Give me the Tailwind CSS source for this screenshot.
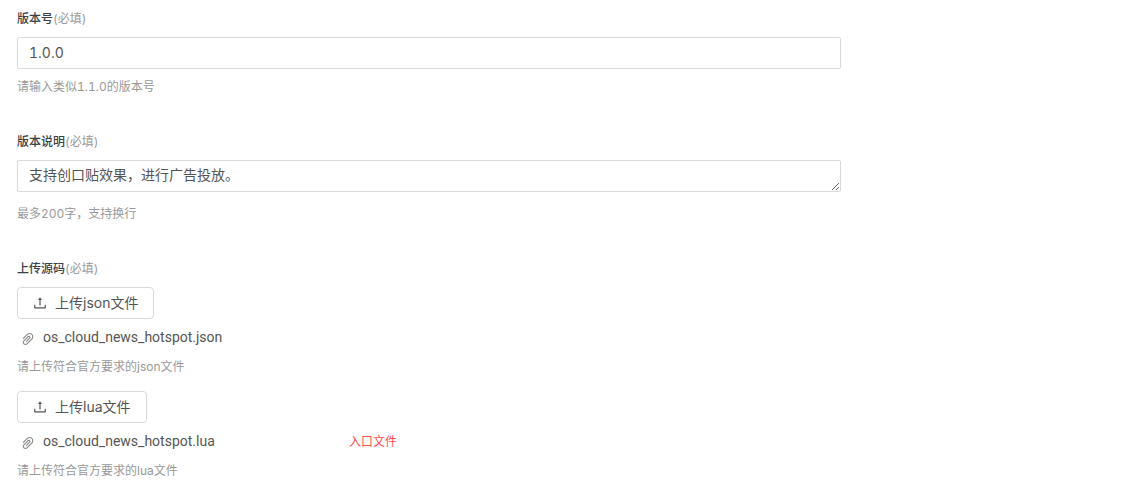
<!DOCTYPE html>
<html lang="zh-CN">
<head>
<meta charset="utf-8">
<meta name="viewport" content="width=device-width, initial-scale=1">
<title>版本上传</title>
<script src="https://cdn.jsdelivr.net/npm/@tailwindcss/browser@4"></script>
</head>
<body class="bg-white font-['Inter','Noto_Sans_CJK_SC',sans-serif] text-sm text-[#555] tabular-nums">
<svg class="hidden" aria-hidden="true">
  <symbol id="upload" viewBox="0 0 1024 1024"><path d="M400 317.7h73.9V656c0 4.4 3.6 8 8 8h60c4.4 0 8-3.6 8-8V317.7H624c6.7 0 10.4-7.7 6.3-12.9L518.3 163a8 8 0 00-12.6 0l-112 141.7c-4.1 5.3-.4 13 6.3 13zM878 626h-60c-4.4 0-8 3.6-8 8v154H214V634c0-4.4-3.6-8-8-8h-60c-4.4 0-8 3.6-8 8v198c0 17.7 14.3 32 32 32h684c17.7 0 32-14.3 32-32V634c0-4.4-3.6-8-8-8z"/></symbol>
  <symbol id="clip" viewBox="0 0 1024 1024"><path d="M779.3 196.6c-94.2-94.2-247.6-94.2-341.7 0l-261 260.8c-1.7 1.7-2.6 4-2.6 6.4s.9 4.7 2.6 6.4l36.9 36.9a9 9 0 0012.7 0l261-260.8c32.4-32.4 75.5-50.2 121.3-50.2s88.9 17.8 121.2 50.2c32.4 32.4 50.2 75.5 50.2 121.2 0 45.8-17.8 88.8-50.2 121.2l-266 265.9-43.1 43.1c-40.3 40.3-105.8 40.3-146.1 0-19.5-19.5-30.2-45.4-30.2-73s10.7-53.5 30.2-73l263.9-263.8c6.7-6.6 15.5-10.3 24.9-10.3h.1c9.4 0 18.1 3.7 24.7 10.3 6.7 6.7 10.3 15.5 10.3 24.9 0 9.3-3.7 18.1-10.3 24.7L372.4 653c-1.7 1.7-2.6 4-2.6 6.4s.9 4.7 2.6 6.4l36.9 36.9a9 9 0 0012.7 0l215.6-215.6c19.9-19.9 30.8-46.3 30.8-74.4s-11-54.6-30.8-74.4c-41.1-41.1-107.9-41-149 0L463 364 224.8 602.1A172.22 172.22 0 00174 724.8c0 46.3 18.1 89.8 50.8 122.5 33.9 33.8 78.3 50.7 122.7 50.7 44.4 0 88.8-16.9 122.6-50.7l309.2-309C824.8 492.7 850 432 850 367.5c.1-64.6-25.1-125.3-70.7-170.9z"/></symbol>
</svg>
<form class="flex max-w-[858px] flex-col gap-[35px] px-[17px] pt-[9px]">
  <div class="flex flex-col">
    <label for="version" class="text-xs/5 font-medium text-[#3a4148]">版本号<span class="font-normal text-[#999]">(必填)</span></label>
    <input id="version" type="text" value="1.0.0" class="mt-2 h-8 rounded-xs border border-[#d9d9d9] px-[11px] pb-px">
    <p class="mt-2 text-xs/5 text-[#999]">请输入类似1.1.0的版本号</p>
  </div>
  <div class="flex flex-col">
    <label for="notes" class="text-xs/5 font-medium text-[#3a4148]">版本说明<span class="font-normal text-[#999]">(必填)</span></label>
    <textarea id="notes" rows="1" class="mt-2 h-8 resize-y rounded-xs border border-[#d9d9d9] px-[11px] py-1 leading-5">支持创口贴效果，进行广告投放。</textarea>
    <p class="mt-3 text-xs/5 text-[#999]">最多200字，支持换行</p>
  </div>
  <fieldset class="flex flex-col">
    <legend class="text-xs/5 font-medium text-[#3a4148]">上传源码<span class="font-normal text-[#999]">(必填)</span></legend>
    <div class="mt-2 flex flex-col gap-[14px]">
      <div class="flex flex-col items-start">
        <button type="button" class="flex h-8 items-center gap-[7px] rounded-[4px] border border-[#d9d9d9] pr-[15px] pl-[14px]"><svg class="size-4 fill-current"><use href="#upload"/></svg>上传json文件</button>
        <div class="mt-2 flex items-center gap-[7px] pl-[3px] font-['Roboto',sans-serif] leading-5"><svg class="mt-1 size-4 fill-[#888]"><use href="#clip"/></svg>os_cloud_news_hotspot.json</div>
        <p class="mt-[10px] text-xs/5 text-[#999]">请上传符合官方要求的json文件</p>
      </div>
      <div class="flex flex-col items-start">
        <button type="button" class="flex h-8 items-center gap-[7px] rounded-[4px] border border-[#d9d9d9] pr-[15px] pl-[14px]"><svg class="size-4 fill-current"><use href="#upload"/></svg>上传lua文件</button>
        <div class="mt-2 flex items-start">
          <div class="flex w-[332px] items-center gap-[7px] pl-[3px] font-['Roboto',sans-serif] leading-5"><svg class="mt-1 size-4 fill-[#888]"><use href="#clip"/></svg>os_cloud_news_hotspot.lua</div>
          <span class="pt-px text-xs/5 text-[#ff4d4f]">入口文件</span>
        </div>
        <p class="mt-[9px] text-xs/5 text-[#999]">请上传符合官方要求的lua文件</p>
      </div>
    </div>
  </fieldset>
</form>
</body>
</html>
